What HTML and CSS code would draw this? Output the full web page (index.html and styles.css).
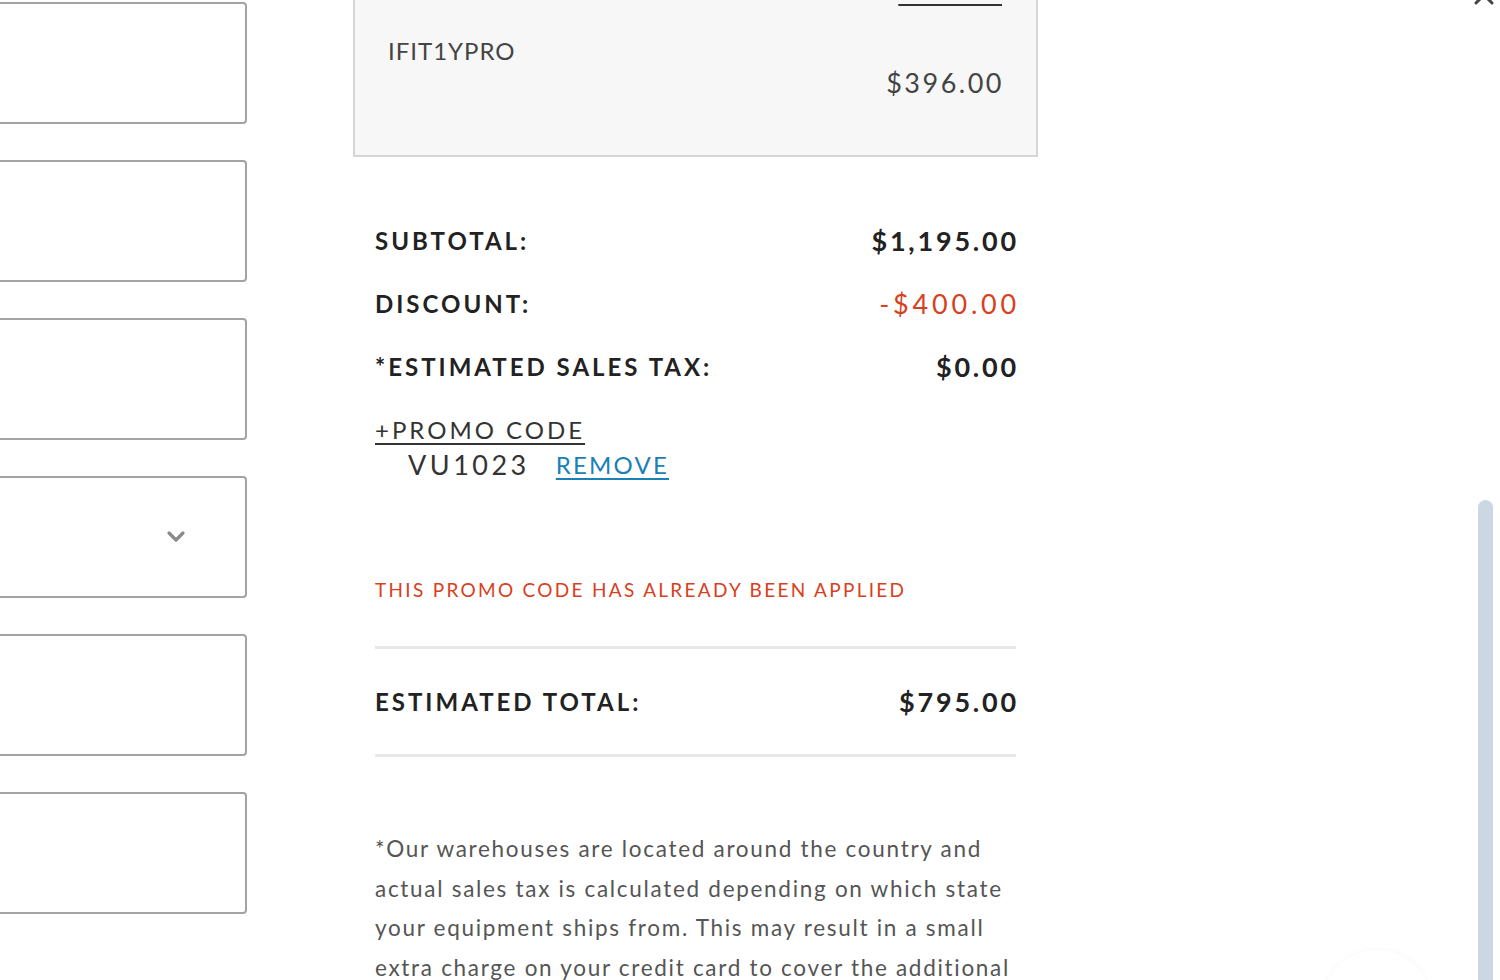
FILE: index.html
```html
<!DOCTYPE html>
<html lang="en">
<head>
<meta charset="utf-8">
<title>Checkout summary</title>
<link rel="stylesheet" href="styles.css">
</head>
<body>
<div class="viewport">
  <div class="page">
    <div class="form">
      <div class="field"></div>
      <div class="field"></div>
      <div class="field"></div>
      <div class="field select">
        <svg class="chev" width="20" height="14" viewBox="0 0 20 14"><path d="M3 3 L10 10 L17 3" fill="none" stroke="#8a8a8a" stroke-width="3.2" stroke-linecap="round" stroke-linejoin="round"/></svg>
      </div>
      <div class="field"></div>
      <div class="field"></div>
    </div>
    <div class="summary">
      <div class="card">
        <div class="card-head">
          <span class="card-title">1-YEAR IFIT PRO MEMBERSHIP</span>
          <span class="card-link">REMOVE</span>
        </div>
        <div class="card-sku">IFIT1YPRO</div>
        <div class="card-price">$396.00</div>
      </div>
      <div class="totals">
        <div class="row"><span class="label">SUBTOTAL:</span><span class="value">$1,195.00</span></div>
        <div class="row"><span class="label">DISCOUNT:</span><span class="value discount">-$400.00</span></div>
        <div class="row"><span class="label">*ESTIMATED SALES TAX:</span><span class="value">$0.00</span></div>
        <div class="promo">
          <span class="promo-link">+PROMO CODE</span>
          <div class="promo-applied"><span class="code">VU1023</span><span class="remove">REMOVE</span></div>
        </div>
        <div class="error">THIS PROMO CODE HAS ALREADY BEEN APPLIED</div>
        <div class="total-row"><span class="label">ESTIMATED TOTAL:</span><span class="value">$795.00</span></div>
        <p class="note">*Our warehouses are located around the country and actual sales tax is calculated depending on which state your equipment ships from. This may result in a small extra charge on your credit card to cover the additional</p>
      </div>
    </div>
  </div>
  <svg class="close" width="24" height="24" viewBox="0 0 24 24"><path d="M4 4 L20 20 M20 4 L4 20" stroke="#444" stroke-width="3" stroke-linecap="round"/></svg>
  <div class="scrollbar"></div>
  <div class="chat"></div>
</div>
</body>
</html>
```
FILE: styles.css
```css
html, body {
  margin: 0;
  padding: 0;
  background: #ffffff;
}
body {
  font-family: "Lato", "Liberation Sans", sans-serif;
  color: #222;
}
.viewport {
  position: relative;
  width: 1500px;
  height: 980px;
  overflow: hidden;
  background: #fff;
}
.page {
  display: flex;
  align-items: flex-start;
  gap: 106px;
}
.form {
  width: 267px;
  margin-left: -20px;
  padding-top: 2px;
  display: flex;
  flex-direction: column;
  gap: 36px;
}
.field {
  height: 118px;
  border: 2px solid #a3a3a3;
  border-radius: 4px;
  background: #fff;
  display: flex;
  align-items: center;
  justify-content: flex-end;
  padding-right: 59px;
}
.chev {
  display: block;
}
.summary {
  width: 685px;
  display: flex;
  flex-direction: column;
}
.card {
  margin-top: -68px;
  height: 225px;
  box-sizing: border-box;
  border: 2px solid #d6d6d6;
  background: #f7f7f7;
  padding: 42px 34px 0 33px;
  color: #444;
}
.card-head {
  display: flex;
  justify-content: space-between;
  align-items: baseline;
  font-size: 22px;
  line-height: 28px;
  letter-spacing: 2px;
  font-weight: 700;
  color: #333;
}
.card-link {
  text-decoration: underline;
  text-underline-offset: 6px;
  text-decoration-thickness: 2px;
  font-weight: 400;
  color: #333;
}
.card-sku {
  margin-top: 32px;
  font-size: 24px;
  line-height: 30px;
  letter-spacing: 1px;
}
.card-price {
  text-align: right;
  font-size: 27px;
  line-height: 34px;
  letter-spacing: 2.5px;
  margin-right: -2px;
}
.totals {
  padding: 52px 22px 0 22px;
}
.row, .total-row {
  display: flex;
  justify-content: space-between;
  align-items: center;
  height: 63px;
}
.label {
  font-weight: 700;
  font-size: 24px;
  letter-spacing: 3px;
  color: #222;
}
.value {
  font-weight: 700;
  font-size: 27px;
  letter-spacing: 2.8px;
  margin-right: -3px;
  color: #222;
}
.value.discount {
  font-weight: 400;
  letter-spacing: 3.8px;
  margin-right: -4px;
  color: #d8401e;
}
.promo {
  margin-top: 15px;
  display: flex;
  flex-direction: column;
  align-items: flex-start;
}
.promo-link {
  font-size: 24px;
  line-height: 34px;
  letter-spacing: 3px;
  color: #333;
  text-decoration: underline;
  text-underline-offset: 4px;
  text-decoration-thickness: 2px;
}
.promo-applied {
  display: flex;
  align-items: center;
  gap: 26px;
  height: 34px;
  padding-left: 33px;
}
.code {
  font-size: 27px;
  letter-spacing: 3.5px;
  color: #333;
}
.remove {
  font-size: 24px;
  letter-spacing: 2.2px;
  color: #1a80b6;
  text-decoration: underline;
  text-underline-offset: 4px;
  text-decoration-thickness: 2px;
}
.error {
  margin-top: 97px;
  font-size: 19px;
  line-height: 24px;
  letter-spacing: 2.3px;
  color: #d8401e;
}
.total-row {
  margin-top: 44px;
  height: 105px;
  border-top: 3px solid #e8e8e8;
  border-bottom: 3px solid #e8e8e8;
}
.note {
  margin: 72px 0 0 0;
  font-size: 22.5px;
  line-height: 39.5px;
  letter-spacing: 1.7px;
  color: #555;
  width: 641px;
}
.close {
  position: absolute;
  right: 4px;
  top: -17px;
}
.scrollbar {
  position: absolute;
  left: 1478px;
  top: 500px;
  width: 15px;
  height: 500px;
  border-radius: 8px;
  background: #cbd8e4;
}
.chat {
  position: absolute;
  left: 1322px;
  top: 950px;
  width: 110px;
  height: 110px;
  border-radius: 50%;
  background: #fff;
  box-shadow: 0 0 6px rgba(0,0,0,0.04);
}
```
